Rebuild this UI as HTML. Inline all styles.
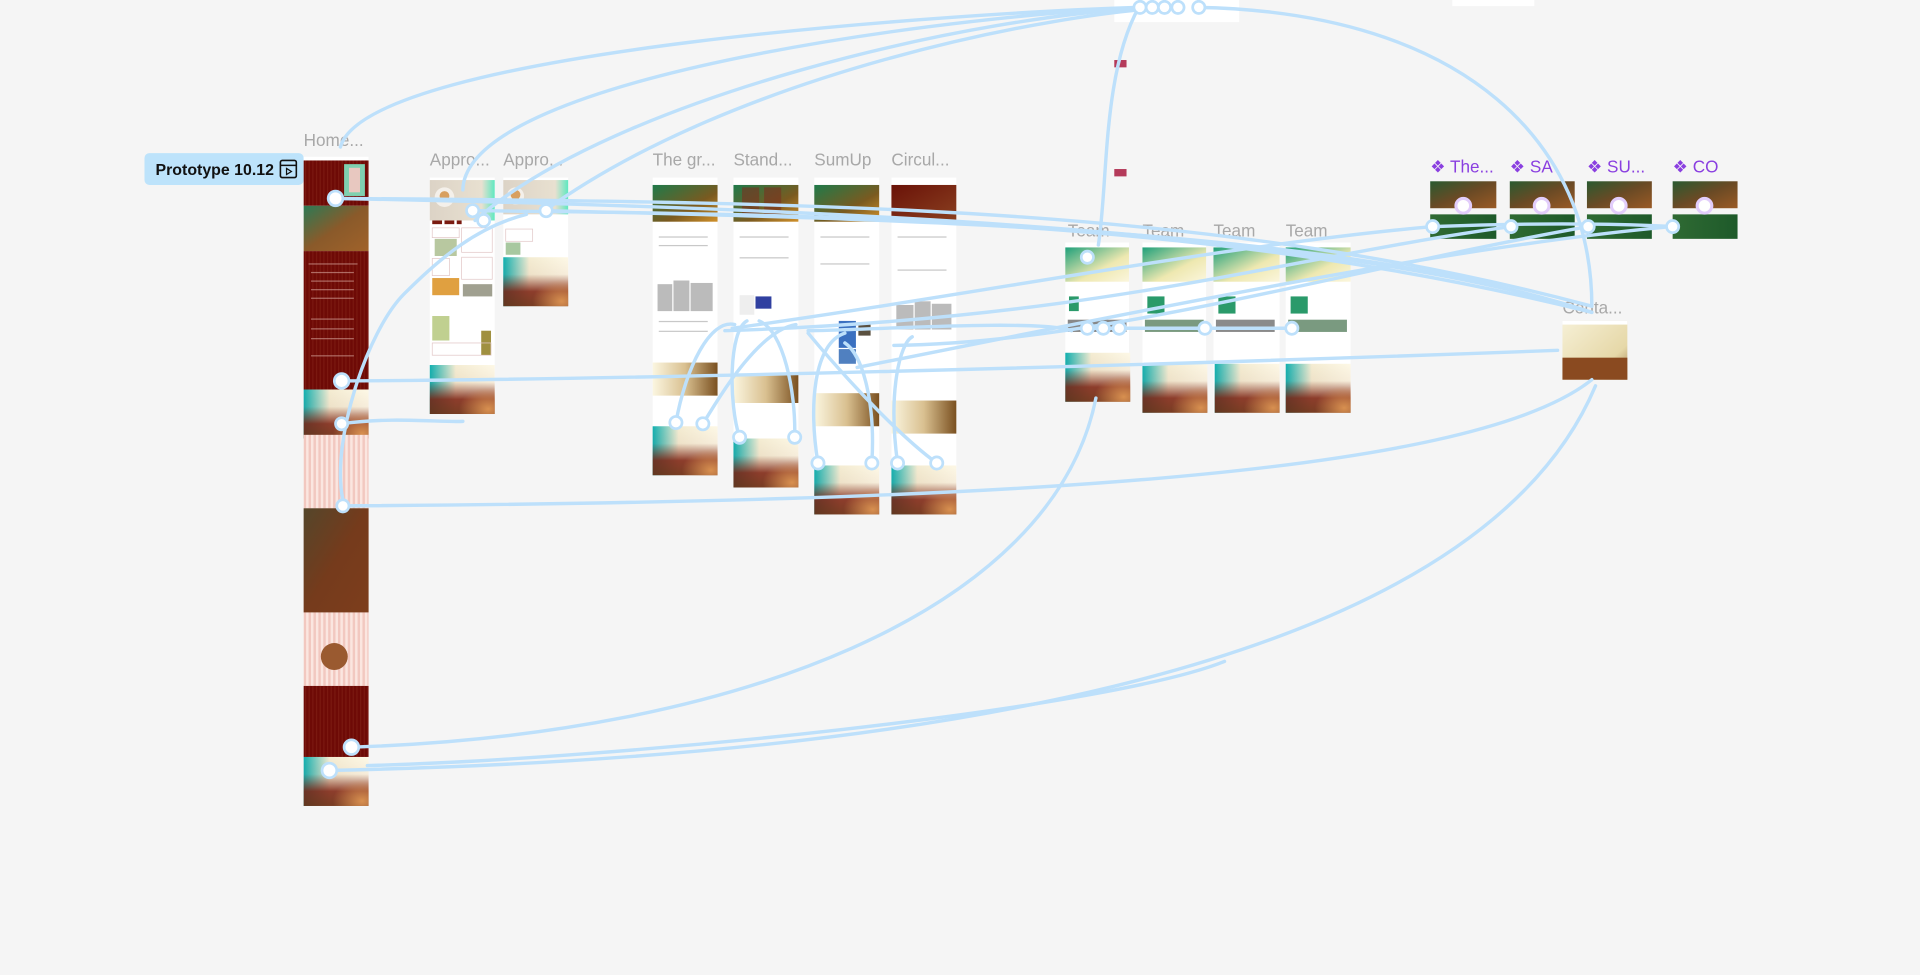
<!DOCTYPE html>
<html><head><meta charset="utf-8"><style>
html,body{margin:0;padding:0;background:#f5f5f5;overflow:hidden}
svg{display:block}
text{font-family:"Liberation Sans",sans-serif}
</style></head><body>
<svg width="1920" height="975" viewBox="0 0 1568 796" preserveAspectRatio="none" xmlns="http://www.w3.org/2000/svg">
<defs>
<linearGradient id="fh" x1="0" y1="0" x2="1" y2="0">
<stop offset="0" stop-color="#12b0b0"/><stop offset="0.4" stop-color="#f4ecd2"/><stop offset="1" stop-color="#fdf8e6"/></linearGradient>
<linearGradient id="fv" x1="0" y1="0" x2="0" y2="1">
<stop offset="0" stop-color="#7a2010" stop-opacity="0"/><stop offset="0.35" stop-color="#7a2010" stop-opacity="0.05"/><stop offset="0.7" stop-color="#7a1e0e" stop-opacity="0.85"/><stop offset="1" stop-color="#6a2a10" stop-opacity="0.9"/></linearGradient>
<radialGradient id="fr" cx="0.9" cy="0.9" r="0.45"><stop offset="0" stop-color="#d89050"/><stop offset="1" stop-color="#d89050" stop-opacity="0"/></radialGradient>
<linearGradient id="olive" x1="0" y1="0" x2="1" y2="1"><stop offset="0" stop-color="#2c7a55"/><stop offset="0.5" stop-color="#8a5a2a"/><stop offset="1" stop-color="#a0622a"/></linearGradient>
<linearGradient id="hero" x1="0" y1="0" x2="1" y2="1"><stop offset="0" stop-color="#1f7a4a"/><stop offset="0.6" stop-color="#7a5a20"/><stop offset="1" stop-color="#d0902a"/></linearGradient>
<linearGradient id="heroR" x1="0" y1="0" x2="1" y2="1"><stop offset="0" stop-color="#6a1208"/><stop offset="1" stop-color="#8a4020"/></linearGradient>
<linearGradient id="team" x1="0" y1="0" x2="1" y2="1"><stop offset="0" stop-color="#1fa07a"/><stop offset="0.6" stop-color="#eee8b0"/><stop offset="1" stop-color="#fbf6dd"/></linearGradient>
<linearGradient id="comp" x1="0" y1="0" x2="1" y2="1"><stop offset="0" stop-color="#2a5a30"/><stop offset="0.5" stop-color="#6a4a25"/><stop offset="1" stop-color="#9a5a25"/></linearGradient>
<linearGradient id="comp2" x1="0" y1="0" x2="1" y2="0"><stop offset="0" stop-color="#2f6a33"/><stop offset="1" stop-color="#1e5a2a"/></linearGradient>
<linearGradient id="beige" x1="0" y1="0" x2="1" y2="0"><stop offset="0" stop-color="#dcd3c6"/><stop offset="0.8" stop-color="#e8e0d0"/><stop offset="1" stop-color="#5fe8c0"/></linearGradient>
<linearGradient id="sepia" x1="0" y1="0" x2="1" y2="0"><stop offset="0" stop-color="#fbf6e0"/><stop offset="0.5" stop-color="#d9c090"/><stop offset="1" stop-color="#7a5020"/></linearGradient>
<linearGradient id="conta" x1="0" y1="0" x2="1" y2="1"><stop offset="0" stop-color="#f6f0d6"/><stop offset="0.7" stop-color="#e6d8a8"/><stop offset="1" stop-color="#a08050"/></linearGradient>
<pattern id="stripes" width="3" height="10" patternUnits="userSpaceOnUse"><rect width="3" height="10" fill="#6e0a06"/><rect width="1" height="10" fill="#7a1810"/></pattern>
<pattern id="pstripes" width="4" height="10" patternUnits="userSpaceOnUse"><rect width="4" height="10" fill="#fbe6e0"/><rect width="2" height="10" fill="#f2c8c0"/></pattern>
<g id="ft"><rect width="53" height="40" fill="url(#fh)"/><rect width="53" height="40" fill="url(#fv)"/><rect width="53" height="40" fill="url(#fr)"/></g>
</defs>

<rect x="910" y="0" width="102" height="18" fill="#fff"/>
<rect x="1186" y="0" width="67" height="5" fill="#fff"/>
<rect x="910" y="49" width="10" height="6" fill="#b43a5a"/>
<rect x="910" y="138" width="10" height="6" fill="#b43a5a"/>

<g fill="#a8a8a8" font-size="14">
<text x="248" y="119">Home...</text>
<text x="351" y="135">Appro...</text>
<text x="411" y="135">Appro...</text>
<text x="533" y="135">The gr...</text>
<text x="599" y="135">Stand...</text>
<text x="665" y="135">SumUp</text>
<text x="728" y="135">Circul...</text>
<text x="872" y="193">Team</text>
<text x="933" y="193">Team</text>
<text x="991" y="193">Team</text>
<text x="1050" y="193">Team</text>
<text x="1276" y="256">Conta...</text>
</g>
<g fill="#8a3fe0" font-size="14">
<text x="1168" y="141">❖ The...</text>
<text x="1233" y="141">❖ SA</text>
<text x="1296" y="141">❖ SU...</text>
<text x="1366" y="141">❖ CO</text>
</g>

<rect x="118" y="125" width="130" height="26" rx="4" fill="#bde3fb"/>
<text x="127" y="143" font-size="13" font-weight="bold" fill="#111">Prototype 10.12</text>
<rect x="229" y="131" width="13" height="14" rx="1.5" fill="none" stroke="#111" stroke-width="1.3"/>
<line x1="229" y1="135" x2="242" y2="135" stroke="#111" stroke-width="1.2"/>
<path d="M234 137.5 L238 140 L234 142.5 Z" fill="none" stroke="#111" stroke-width="1"/>

<rect x="248" y="128" width="53" height="3" fill="#fff"/>
<rect x="248" y="131" width="53" height="37" fill="url(#stripes)"/>
<rect x="281" y="134" width="17" height="26" fill="#7fd0b0"/><rect x="285" y="137" width="9" height="20" fill="#e8c8c0"/>
<rect x="248" y="168" width="53" height="37" fill="url(#olive)"/>
<rect x="248" y="205" width="53" height="113" fill="url(#stripes)"/>
<g fill="#d8a8a0" opacity="0.6"><rect x="252" y="215" width="40" height="1"/><rect x="254" y="222" width="35" height="1"/><rect x="254" y="229" width="35" height="1"/><rect x="254" y="236" width="35" height="1"/><rect x="254" y="243" width="35" height="1"/><rect x="254" y="260" width="35" height="1"/><rect x="254" y="268" width="35" height="1"/><rect x="254" y="276" width="35" height="1"/><rect x="254" y="290" width="35" height="1"/></g>
<use href="#ft" x="248" y="318"/>
<rect x="248" y="355" width="53" height="60" fill="url(#pstripes)"/>
<rect x="248" y="415" width="53" height="85" fill="#6a2a14"/>
<rect x="248" y="415" width="53" height="85" fill="url(#olive)" opacity="0.35"/>
<rect x="248" y="500" width="53" height="60" fill="url(#pstripes)"/>
<rect x="262" y="525" width="22" height="22" rx="11" fill="#9a5a30"/>
<rect x="248" y="560" width="53" height="58" fill="url(#stripes)"/>
<use href="#ft" x="248" y="618"/>

<rect x="351" y="145" width="53" height="193" fill="#fff"/>
<rect x="351" y="147" width="53" height="33" fill="url(#beige)"/>
<circle cx="363" cy="161" r="8" fill="#f4f0ea"/><circle cx="363" cy="160" r="4" fill="#d8a060"/>
<g fill="#7a1a10"><rect x="353" y="180" width="8" height="3"/><rect x="363" y="180" width="8" height="3"/><rect x="373" y="180" width="4" height="3"/></g>
<rect x="355" y="195" width="18" height="14" fill="#b8c8a0"/>
<rect x="353" y="227" width="22" height="14" fill="#e0a040"/>
<rect x="378" y="232" width="24" height="10" fill="#a0a090"/>
<rect x="353" y="258" width="14" height="20" fill="#c0d090"/>
<rect x="393" y="270" width="8" height="20" fill="#a09040"/>
<g stroke="#e2c8c8" stroke-width="0.6" fill="none"><rect x="353" y="186" width="22" height="8"/><rect x="377" y="186" width="25" height="20"/><rect x="353" y="211" width="14" height="14"/><rect x="377" y="210" width="25" height="18"/><rect x="353" y="280" width="48" height="10"/></g>
<use href="#ft" x="351" y="298"/>

<rect x="411" y="145" width="53" height="103" fill="#fff"/>
<rect x="411" y="147" width="53" height="28" fill="url(#beige)"/>
<circle cx="421" cy="160" r="7" fill="#f4f0ea"/><circle cx="421" cy="159" r="4" fill="#d8a060"/>
<rect x="413" y="187" width="22" height="10" fill="none" stroke="#e2c8c8" stroke-width="0.6"/>
<rect x="413" y="198" width="12" height="10" fill="#a8c8a0"/>
<use href="#ft" x="411" y="210"/>

<rect x="533" y="145" width="53" height="243" fill="#fff"/>
<rect x="533" y="151" width="53" height="30" fill="url(#hero)"/>
<rect x="537" y="232" width="12" height="22" fill="#bbb"/><rect x="550" y="229" width="13" height="25" fill="#bbb"/><rect x="564" y="231" width="18" height="23" fill="#bbb"/>
<rect x="533" y="296" width="53" height="27" fill="url(#sepia)"/>
<use href="#ft" x="533" y="348"/>
<rect x="599" y="145" width="53" height="253" fill="#fff"/>
<rect x="599" y="151" width="53" height="30" fill="url(#hero)"/>
<rect x="606" y="153" width="14" height="22" fill="#7a3020" opacity="0.6"/><rect x="624" y="153" width="14" height="22" fill="#7a3020" opacity="0.6"/>
<rect x="604" y="241" width="12" height="16" fill="#eee"/><rect x="617" y="242" width="13" height="10" fill="#3040a0"/>
<rect x="599" y="305" width="53" height="24" fill="url(#sepia)"/>
<use href="#ft" x="599" y="358"/>
<rect x="665" y="145" width="53" height="275" fill="#fff"/>
<rect x="665" y="151" width="53" height="30" fill="url(#hero)"/>
<rect x="685" y="262" width="14" height="22" fill="#3a70c0"/><rect x="685" y="285" width="14" height="12" fill="#5080c0"/><rect x="701" y="264" width="10" height="10" fill="#5a5040"/>
<rect x="665" y="321" width="53" height="27" fill="url(#sepia)"/>
<use href="#ft" x="665" y="380"/>
<rect x="728" y="145" width="53" height="275" fill="#fff"/>
<rect x="728" y="151" width="53" height="30" fill="url(#heroR)"/>
<rect x="732" y="249" width="14" height="20" fill="#bbb"/><rect x="747" y="246" width="13" height="23" fill="#bbb"/><rect x="761" y="248" width="16" height="21" fill="#bbb"/>
<rect x="728" y="327" width="53" height="27" fill="url(#sepia)"/>
<use href="#ft" x="728" y="380"/>
<g fill="#c8c8c8"><rect x="538" y="193" width="40" height="1"/><rect x="538" y="200" width="40" height="1"/><rect x="538" y="262" width="40" height="1"/><rect x="538" y="270" width="40" height="1"/><rect x="604" y="193" width="40" height="1"/><rect x="604" y="210" width="40" height="1"/><rect x="670" y="193" width="40" height="1"/><rect x="670" y="215" width="40" height="1"/><rect x="733" y="193" width="40" height="1"/><rect x="733" y="220" width="40" height="1"/></g>

<g>
<rect x="870" y="198" width="52" height="125" fill="#fff"/><rect x="870" y="202" width="52" height="28" fill="url(#team)"/>
<rect x="873" y="242" width="8" height="12" fill="#2a9a6a"/><rect x="872" y="261" width="48" height="10" fill="#888"/>
<use href="#ft" x="870" y="288"/>
<rect x="933" y="198" width="52" height="139" fill="#fff"/><rect x="933" y="202" width="52" height="28" fill="url(#team)"/>
<rect x="937" y="242" width="14" height="14" fill="#2a9a6a"/><rect x="935" y="261" width="48" height="10" fill="#7a9a80"/>
<use href="#ft" x="933" y="297"/>
<rect x="991" y="198" width="54" height="139" fill="#fff"/><rect x="991" y="202" width="54" height="28" fill="url(#team)"/>
<rect x="995" y="242" width="14" height="14" fill="#2a9a6a"/><rect x="993" y="261" width="48" height="10" fill="#8a8a8a"/>
<use href="#ft" x="992" y="297"/>
<rect x="1050" y="198" width="53" height="139" fill="#fff"/><rect x="1050" y="202" width="53" height="28" fill="url(#team)"/>
<rect x="1054" y="242" width="14" height="14" fill="#2a9a6a"/><rect x="1052" y="261" width="48" height="10" fill="#7a9a80"/>
<use href="#ft" x="1050" y="297"/>
</g>

<g>
<rect x="1168" y="148" width="54" height="22" fill="url(#comp)"/><rect x="1168" y="175" width="54" height="20" fill="url(#comp2)"/>
<rect x="1233" y="148" width="53" height="22" fill="url(#comp)"/><rect x="1233" y="175" width="53" height="20" fill="url(#comp2)"/>
<rect x="1296" y="148" width="53" height="22" fill="url(#comp)"/><rect x="1296" y="175" width="53" height="20" fill="url(#comp2)"/>
<rect x="1366" y="148" width="53" height="22" fill="url(#comp)"/><rect x="1366" y="175" width="53" height="20" fill="url(#comp2)"/>
</g>
<rect x="1276" y="262" width="53" height="48" fill="url(#conta)"/>
<rect x="1276" y="262" width="53" height="3" fill="#fff"/>
<rect x="1276" y="292" width="53" height="18" fill="#8a4a20"/>

<g fill="none" stroke="#bde0fb" stroke-width="2.8" stroke-linecap="round">
<path d="M274 162 C700 165 1000 170 1300 250"/>
<path d="M274 162 C700 170 1100 190 1300 255"/>
<path d="M386 172 C700 175 1000 180 1300 255"/>
<path d="M446 172 C800 180 1100 190 1300 255"/>
<path d="M278 120 C300 40 800 10 930 6"/>
<path d="M378 155 C380 60 800 10 940 6"/>
<path d="M388 180 C500 80 800 10 950 6"/>
<path d="M445 172 C600 60 860 10 960 6"/>
<path d="M978 6 C1200 10 1300 120 1300 250"/>
<path d="M930 6 C900 60 905 150 897 200"/>
<path d="M279 311 C500 310 900 300 1272 286"/>
<path d="M279 346 C320 340 360 345 378 344"/>
<path d="M279 413 C800 410 1200 390 1300 310"/>
<path d="M287 610 C600 600 860 500 895 325"/>
<path d="M268 629 C700 620 1200 560 1303 315"/>
<path d="M280 408 C270 360 300 270 330 240 C360 210 390 185 430 175"/>
<path d="M1170 185 C1000 200 800 240 598 268"/>
<path d="M1234 185 C1050 210 900 260 592 270"/>
<path d="M1297 185 C1100 220 900 280 730 282"/>
<path d="M1365 185 C1200 200 1000 240 700 300"/>
<path d="M1170 185 C1300 180 1360 185 1370 185"/>
<path d="M888 268 C950 268 1000 268 1055 268"/>
<path d="M875 270 C850 260 700 270 660 270"/>
<path d="M552 345 C560 300 580 260 600 265"/>
<path d="M574 346 C590 320 620 270 650 265"/>
<path d="M604 357 C595 330 595 270 610 262"/>
<path d="M649 357 C650 320 640 270 620 262"/>
<path d="M668 378 C660 330 665 280 690 272"/>
<path d="M712 378 C715 330 705 290 690 280"/>
<path d="M733 378 C725 320 735 280 745 275"/>
<path d="M765 378 C740 360 700 320 660 272"/>
<path d="M300 625 C500 620 900 580 1000 540"/>
</g>
<g fill="#fff" stroke="#bde0fb" stroke-width="2.2">
<circle cx="274" cy="162" r="6"/><circle cx="279" cy="311" r="6"/><circle cx="279" cy="346" r="5"/><circle cx="280" cy="413" r="5"/><circle cx="287" cy="610" r="6"/><circle cx="269" cy="629" r="6"/>
<circle cx="386" cy="172" r="5"/><circle cx="395" cy="180" r="5"/><circle cx="446" cy="172" r="5"/>
<circle cx="931" cy="6" r="5"/><circle cx="941" cy="6" r="5"/><circle cx="951" cy="6" r="5"/><circle cx="962" cy="6" r="5"/><circle cx="979" cy="6" r="5"/>
<circle cx="552" cy="345" r="5"/><circle cx="574" cy="346" r="5"/><circle cx="604" cy="357" r="5"/><circle cx="649" cy="357" r="5"/>
<circle cx="668" cy="378" r="5"/><circle cx="712" cy="378" r="5"/><circle cx="733" cy="378" r="5"/><circle cx="765" cy="378" r="5"/>
<circle cx="888" cy="210" r="5"/><circle cx="888" cy="268" r="5"/><circle cx="901" cy="268" r="5"/><circle cx="914" cy="268" r="5"/><circle cx="984" cy="268" r="5"/><circle cx="1055" cy="268" r="5"/>
<circle cx="1170" cy="185" r="5"/><circle cx="1234" cy="185" r="5"/><circle cx="1297" cy="185" r="5"/><circle cx="1366" cy="185" r="5"/>
</g>
<g fill="#fff" stroke="#e2cdfb" stroke-width="2.5">
<circle cx="1195" cy="168" r="6"/><circle cx="1259" cy="168" r="6"/><circle cx="1322" cy="168" r="6"/><circle cx="1392" cy="168" r="6"/>
</g>
</svg>
</body></html>
